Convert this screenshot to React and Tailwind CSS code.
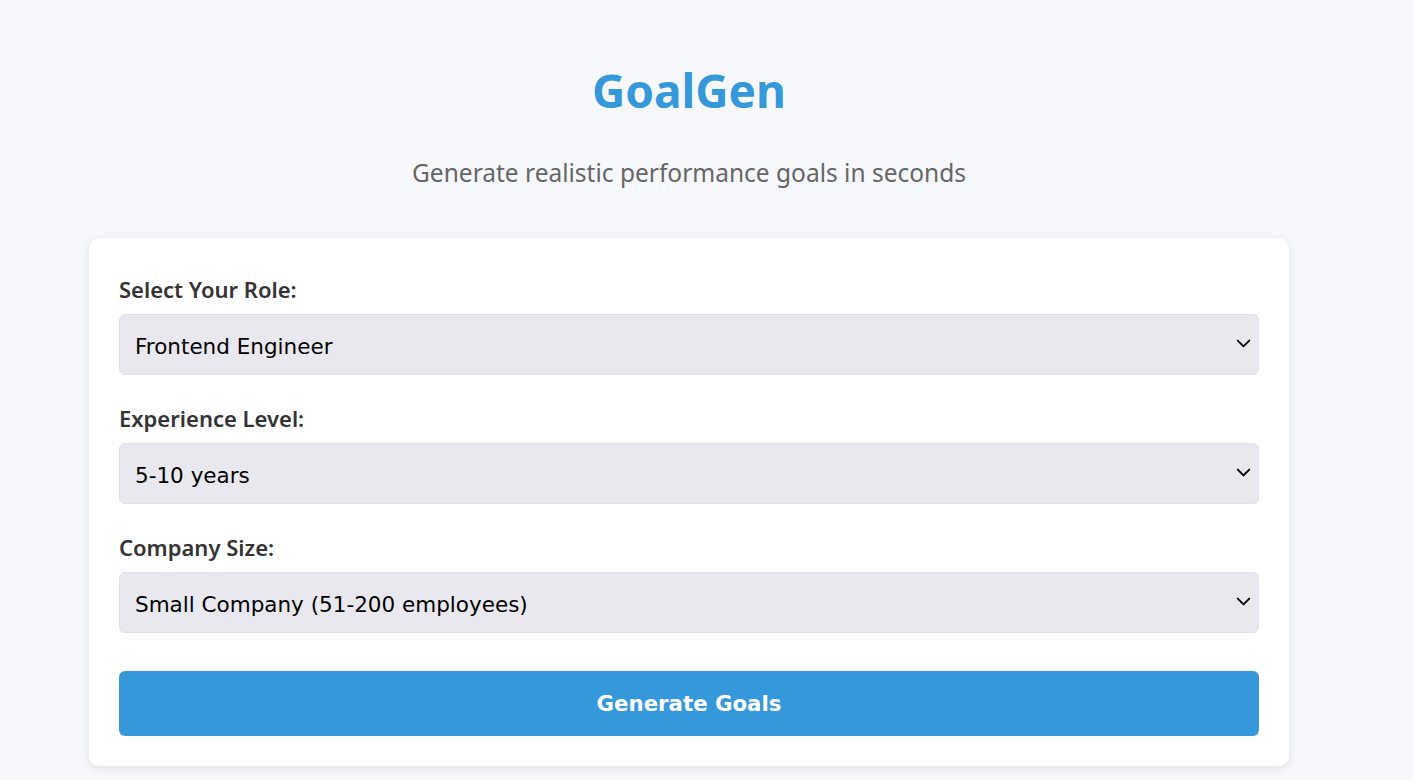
import React, { useState } from 'react';
import { ChevronDown } from 'lucide-react';

const roles = ['Frontend Engineer', 'Backend Engineer', 'Full Stack Engineer', 'Product Manager', 'Designer'];
const levels = ['0-2 years', '2-5 years', '5-10 years', '10+ years'];
const sizes = [
  'Startup (1-50 employees)',
  'Small Company (51-200 employees)',
  'Medium Company (201-1000 employees)',
  'Large Company (1000+ employees)',
];

const Field = ({ label, value, onChange, options }) => (
  <div>
    <label className="block mb-[10px] text-[22px] leading-[30px] font-semibold text-[#333]">{label}</label>
    <div className="relative">
      <select
        value={value}
        onChange={(e) => onChange(e.target.value)}
        className="w-full h-[61px] appearance-none rounded-[6px] border border-[#dde3ea] bg-[#e9e8ee] pl-[15px] pr-10 pt-[5px] text-[21.5px] text-black outline-none"
        style={{ fontFamily: 'Tahoma, "DejaVu Sans", sans-serif' }}
      >
        {options.map((o) => (
          <option key={o}>{o}</option>
        ))}
      </select>
      <ChevronDown className="pointer-events-none absolute right-[4px] top-[18px] w-[23px] h-[23px] text-black" strokeWidth={2} />
    </div>
  </div>
);

const App = () => {
  const [role, setRole] = useState(roles[0]);
  const [level, setLevel] = useState(levels[2]);
  const [size, setSize] = useState(sizes[1]);

  return (
    <div className="min-h-screen bg-[#f7f8fc] pr-[35px]" style={{ fontFamily: '"Noto Sans", "Open Sans", sans-serif' }}>
      <div className="flex flex-col items-center">
        <h1 className="mt-[58px] text-[46px] leading-[64px] font-bold text-[#3498db]">GoalGen</h1>
        <p className="mt-[35px] text-[24.5px] leading-[32px] text-[#666]">Generate realistic performance goals in seconds</p>

        <div className="mt-[49px] w-[1200px] bg-white rounded-[10px] shadow-[0_2px_10px_rgba(0,0,0,0.1)] px-[30px] pt-[36px] pb-[30px] flex flex-col">
          <div className="flex flex-col gap-[28px]">
            <Field label="Select Your Role:" value={role} onChange={setRole} options={roles} />
            <Field label="Experience Level:" value={level} onChange={setLevel} options={levels} />
            <Field label="Company Size:" value={size} onChange={setSize} options={sizes} />
          </div>
          <button
            className="mt-[38px] w-full h-[65px] rounded-[6px] bg-[#3498db] text-white text-[21.3px] font-bold"
            style={{ fontFamily: 'Tahoma, "DejaVu Sans", sans-serif' }}
          >
            Generate Goals
          </button>
        </div>
      </div>
    </div>
  );
};

export default App;
